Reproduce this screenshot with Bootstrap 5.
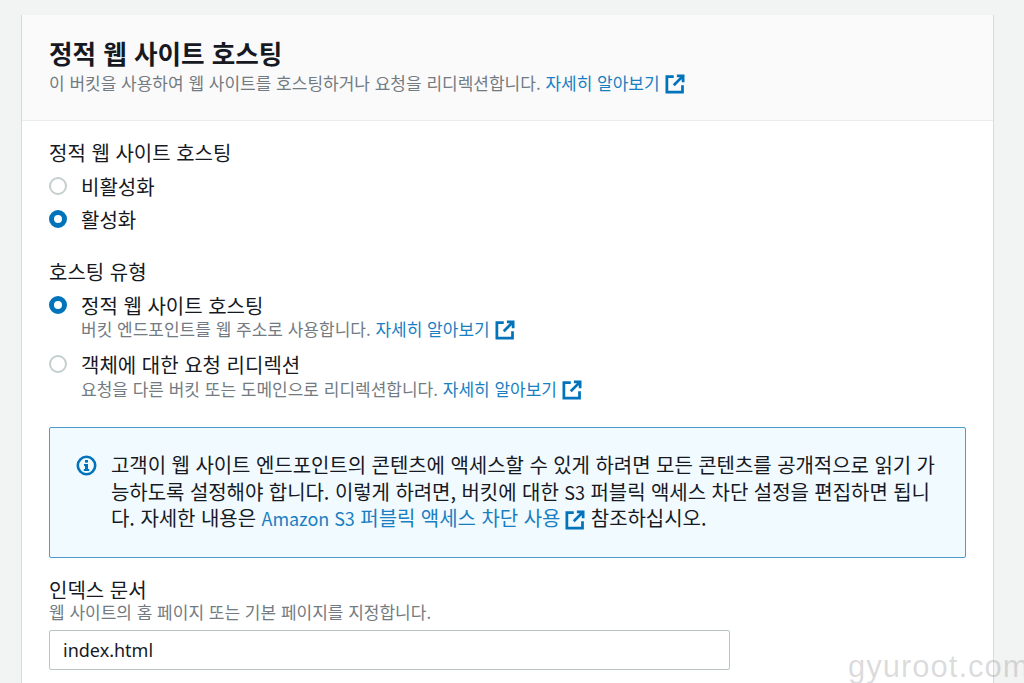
<!DOCTYPE html>
<html lang="ko">
<head>
    <meta charset="UTF-8">
    <meta name="viewport" content="width=device-width, initial-scale=1.0">
    <title>정적 웹 사이트 호스팅</title>
    <link rel="stylesheet" href="https://cdn.jsdelivr.net/npm/bootstrap@5.3.0/dist/css/bootstrap.min.css">
    <style>
        html, body {
            height: 683px;
            overflow: hidden;
        }
        body {
            background-color: #f2f3f3;
            color: #16191f;
            font-family: "Noto Sans CJK KR", "Noto Sans", sans-serif;
            font-size: 20px;
            line-height: 32px;
        }
        a {
            color: #1a7fc1;
            text-decoration: none;
        }
        .s3-panel {
            margin: 15px 31px 0 22px;
            background-color: #fff;
            border-radius: 0;
            border: 0;
            box-shadow: -1px 0 0 #d5dbdb, 1px 0 0 #d5dbdb;
            height: 700px;
        }
        .s3-head {
            background-color: #fafafa;
            border-bottom: 1px solid #eaeded;
            height: 106px;
            padding: 19px 27px 0;
        }
        .s3-title {
            font-size: 25.6px;
            font-weight: 700;
            line-height: 38px;
            margin: 0;
        }
        .s3-desc, .s3-hint {
            color: #737b82;
            font-size: 17px;
            line-height: 24px;
            white-space: nowrap;
        }
        .s3-desc {
            margin-top: -1px;
        }
        .s3-body {
            padding: 17px 27px 0;
        }
        .s3-label {
            line-height: 30px;
        }
        .s3-option {
            display: flex;
            gap: 14px;
            line-height: 33px;
        }
        .s3-first {
            margin-top: 2px;
        }
        .s3-option .s3-hint {
            margin-top: -5px;
        }
        .s3-option.s3-second .s3-hint {
            margin-top: -4px;
        }
        .s3-radio {
            flex: none;
            width: 18px;
            height: 18px;
            margin-top: 7px;
            border-radius: 50%;
            border: 2px solid #c5cfcf;
            background-color: #fff;
        }
        .s3-radio.on {
            border: 5px solid #0073bb;
        }
        .s3-ext {
            width: 20px;
            height: 20px;
            margin-left: 5px;
            vertical-align: -4px;
        }
        .s3-type {
            margin-top: 21px;
        }
        .s3-second {
            margin-top: 7px;
        }
        .s3-info {
            background-color: #f1faff;
            border: 1px solid #4c9bd0;
            border-radius: 2px;
            height: 131px;
            margin-top: 26px;
            padding: 24px 20px 0 26px;
            gap: 14px;
            line-height: 26.5px;
            letter-spacing: -0.06px;
            word-break: break-all;
        }
        .s3-latin {
            font-size: 18px;
        }
        .s3-info-icon {
            flex: none;
            width: 21px;
            height: 21px;
            margin-top: 3px;
        }
        .s3-index {
            margin-top: 17px;
        }
        .s3-index + .s3-hint {
            margin-top: -5px;
        }
        .s3-input {
            border: 1px solid #b9c4c5;
            border-radius: 2px;
            height: 40px;
            width: 681px;
            margin-top: 6px;
            padding: 0 13px;
            font-family: "Noto Sans", "Noto Sans CJK KR", sans-serif;
            font-size: 18px;
            color: #16191f;
            box-shadow: none;
        }
        .s3-mark {
            position: absolute;
            left: 848px;
            top: 649px;
            color: rgba(130, 130, 130, 0.28);
            font-family: "Liberation Sans", sans-serif;
            font-size: 31px;
            line-height: 36px;
            letter-spacing: 1px;
            white-space: nowrap;
        }
    </style>
</head>
<body>

    <div class="card s3-panel">
        <div class="s3-head">
            <h2 class="s3-title">정적 웹 사이트 호스팅</h2>
            <div class="s3-desc">이 버킷을 사용하여 웹 사이트를 호스팅하거나 요청을 리디렉션합니다. <a href="#">자세히 알아보기<svg class="s3-ext" viewBox="0 0 16 16" fill="none" stroke="#0073bb" stroke-width="2.2"><path d="M7 2H1.5v12.5H14V9"/><path d="M9.5 1.5h5v5M14.5 1.5L7 9"/></svg></a></div>
        </div>

        <div class="s3-body">
            <div class="s3-label">정적 웹 사이트 호스팅</div>
            <div class="s3-option s3-first">
                <span class="s3-radio"></span>
                <div>비활성화</div>
            </div>
            <div class="s3-option">
                <span class="s3-radio on"></span>
                <div>활성화</div>
            </div>

            <div class="s3-label s3-type">호스팅 유형</div>
            <div class="s3-option s3-first">
                <span class="s3-radio on"></span>
                <div>
                    <div>정적 웹 사이트 호스팅</div>
                    <div class="s3-hint">버킷 엔드포인트를 웹 주소로 사용합니다. <a href="#">자세히 알아보기<svg class="s3-ext" viewBox="0 0 16 16" fill="none" stroke="#0073bb" stroke-width="2.2"><path d="M7 2H1.5v12.5H14V9"/><path d="M9.5 1.5h5v5M14.5 1.5L7 9"/></svg></a></div>
                </div>
            </div>
            <div class="s3-option s3-second">
                <span class="s3-radio"></span>
                <div>
                    <div>객체에 대한 요청 리디렉션</div>
                    <div class="s3-hint">요청을 다른 버킷 또는 도메인으로 리디렉션합니다. <a href="#">자세히 알아보기<svg class="s3-ext" viewBox="0 0 16 16" fill="none" stroke="#0073bb" stroke-width="2.2"><path d="M7 2H1.5v12.5H14V9"/><path d="M9.5 1.5h5v5M14.5 1.5L7 9"/></svg></a></div>
                </div>
            </div>

            <div class="s3-info d-flex">
                <svg class="s3-info-icon" viewBox="0 0 21 21"><circle cx="10.5" cy="10.5" r="8.7" fill="none" stroke="#0073bb" stroke-width="2.6"/><rect x="9" y="5" width="3" height="2.6" fill="#0073bb"/><path d="M8 9h4v5h1.2v2H7.8v-2H9v-3H8z" fill="#0073bb"/></svg>
                <div>고객이 웹 사이트 엔드포인트의 콘텐츠에 액세스할 수 있게 하려면 모든 콘텐츠를 공개적으로 읽기 가능하도록 설정해야 합니다. 이렇게 하려면, 버킷에 대한 <span class="s3-latin">S3</span> 퍼블릭 액세스 차단 설정을 편집하면 됩니다. 자세한 내용은 <a href="#"><span class="s3-latin">Amazon S3</span> 퍼블릭 액세스 차단 사용<svg class="s3-ext" viewBox="0 0 16 16" fill="none" stroke="#0073bb" stroke-width="2.2"><path d="M7 2H1.5v12.5H14V9"/><path d="M9.5 1.5h5v5M14.5 1.5L7 9"/></svg></a> 참조하십시오.</div>
            </div>

            <div class="s3-label s3-index">인덱스 문서</div>
            <div class="s3-hint">웹 사이트의 홈 페이지 또는 기본 페이지를 지정합니다.</div>
            <input type="text" class="form-control s3-input" value="index.html">
        </div>
    </div>

    <div class="s3-mark">gyuroot.com</div>

    <script src="https://cdn.jsdelivr.net/npm/bootstrap@5.3.0/dist/js/bootstrap.bundle.min.js"></script>
</body>
</html>
